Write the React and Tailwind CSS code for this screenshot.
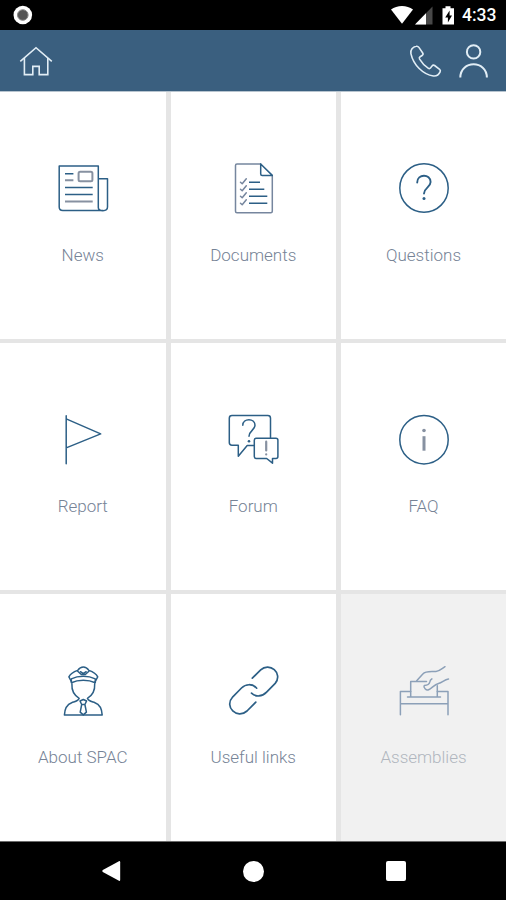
import clsx from "clsx";

const BLUE = "#2c5f86";
const GREY = "#8791a1";

function Icon({ children, stroke = BLUE, viewBox = "0 -0.7 60 60" }) {
  return (
    <svg
      viewBox={viewBox}
      className="h-[60px] w-[60px]"
      fill="none"
      stroke={stroke}
      strokeWidth="1.5"
      strokeLinecap="round"
      strokeLinejoin="round"
    >
      {children}
    </svg>
  );
}

function NewsIcon() {
  return (
    <Icon viewBox="0 0 60 60">
      <path d="M6.2 8h39.1v41.5q0 3.2 4.6 3.2t4.6-3.6V20.7h-9.2M6.2 8v41q0 3.5 3.6 3.5h40" />
      <g strokeLinecap="butt">
        <path d="M12 15.7h8.4M12 29.4h27.7M12 36.4h27.7" />
        <path d="M12 22.2h8.4M12 43.4h27.7" stroke={GREY} strokeWidth="2" />
        <rect x="25.6" y="13.7" width="13.8" height="9.6" rx="1.5" stroke={GREY} strokeWidth="2" />
      </g>
    </Icon>
  );
}

function DocumentsIcon() {
  return (
    <Icon viewBox="0 0 60 60">
      <path
        d="M37.7 6H14q-1.5 0-1.5 1.5v45.7q0 1.5 1.5 1.5h33.8q1.5 0 1.5-1.5V17.5"
        stroke="#76869e"
      />
      <path d="M37.7 6l11.6 11.4M37.7 6v9.9q0 1.5 1.5 1.5h10.1" />
      <path d="M26 24.3h11M26 31.3h15.3M26 38.3h18.3M26 45.3h18.3" strokeLinecap="butt" />
      <path
        d="M17.5 24.3l1.7 1.5 4.1-5M17.5 31.3l1.7 1.5 4.1-5M17.5 38.3l1.7 1.5 4.1-5M17.5 45.3l1.7 1.5 4.1-5"
        stroke="#76869e"
      />
    </Icon>
  );
}

function QuestionsIcon() {
  return (
    <Icon viewBox="0 0 60 60">
      <circle cx="30" cy="30" r="24.2" />
      <path d="M23.2 24.5c0-9 13.4-8.8 13.4-.5 0 5.5-6.6 5.8-6.6 11.5" strokeWidth="1.9" />
      <circle cx="30" cy="40.4" r="1.5" fill={BLUE} stroke="none" />
    </Icon>
  );
}

function ReportIcon() {
  return (
    <Icon>
      <path d="M13.2 6v48M13.2 9.2l34.5 15-34.5 14" />
    </Icon>
  );
}

function ForumIcon() {
  return (
    <Icon>
      <path d="M47.5 28V8.5q0-2.7-2.7-2.7H9Q6.3 5.8 6.3 8.5v24.3q0 2.7 2.7 2.7h6.3v11l8.9-10.8h7" />
      <path d="M33.3 28.5h19.6q2 0 2 2v16.3q0 2-2 2h-3.4v4.7l-5.8-4.7H33.3q-2 0-2-2V30.5q0-2 2-2z" />
      <path d="M19.8 15.5c0-7.3 12.2-7.3 12.2 0 0 4.8-6 5.6-6 11" />
      <circle cx="26" cy="31.5" r="1.3" fill={BLUE} stroke="none" />
      <path d="M43.2 32v8.8M43.2 44.6v.2" stroke={GREY} strokeWidth="2.2" />
    </Icon>
  );
}

function FaqIcon() {
  return (
    <Icon>
      <circle cx="30" cy="30" r="24.2" />
      <path d="M30 26.5V41" stroke={GREY} strokeWidth="3" strokeLinecap="butt" />
      <circle cx="30" cy="20.8" r="1.8" fill={GREY} stroke="none" />
    </Icon>
  );
}

function OfficerIcon() {
  return (
    <Icon>
      {/* Cap */}
      <path d="M18.3 20.8l-2.4-4.6c1.6-3.4 5.3-5.3 8.8-6.5 3.2-4.5 8-4.5 11.2 0 3.5 1.2 7.2 3.1 8.8 6.5l-2.4 4.6" />
      <path d="M18.3 18.2c7-3.4 17-3.4 24 0M18.3 22c7-3.3 17-3.3 24 0M18.3 18.2V22M42.3 18.2V22" />
      <path d="M24.7 10.5l3.6 3.3h4l3.6-3.3M27.5 11l2.8 2 2.8-2" />

      {/* Head and shoulders */}
      <path d="M18.9 23c-.4 6.8 1.6 11.2 7.3 14.6-1 3-4.5 3.3-7.5 4.4-5 1.8-7 6-7.3 12.4h37.8c-.3-6.4-2.3-10.6-7.3-12.4-3-1.1-6.5-1.4-7.5-4.4 5.7-3.4 7.7-7.8 7.3-14.6" />

      {/* Tie */}
      <path d="M27 40.3l3.3-1.5 3.3 1.5-1.7 3.5h-3.2zM28.7 43.8l-1.5 7.6 3.1 2.8 3.1-2.8-1.5-7.6" />
    </Icon>
  );
}

function LinksIcon() {
  return (
    <Icon>
      <g strokeWidth="1.7">
        <path d="M29.3 17.5l8.4-8.3c8.6-8.3 22.7 3.3 14.5 13.5l-8.6 8.8c-4.8 4.8-11 4.9-15.1 1" />
        <path d="M33.7 27.5c-4.4-4.8-11-4.4-15.2-.2l-8.7 8.8c-9.3 10.3 4.5 22.8 14.2 14.2l8.8-8.8" />
      </g>
    </Icon>
  );
}

function AssembliesIcon() {
  return (
    <Icon stroke="#8ca0b8">
      <path d="M6.4 54V30.8h10.3M43.3 30.8H54V54M6.4 43H54" />
      <path d="M32.5 20.7H16.7v15.6M43.3 25v11.3M13.5 36.4h33" />
      <path d="M22.7 20l5.9-6.5c3.5-3.6 8.6-2.3 13.4-2.7 3.8-.4 6-3 9-4.8M54.5 18.3c-4 .5-6.2 3.5-10 4.5-4.3 1.2-6.6 4.7-10 6.3-2.2 1-5.5-2.4-4.2-4.3 2.1 0 5-1 5.6-3.8.2-1.5.8-2 2-2.8" />
    </Icon>
  );
}

const tiles = [
  { label: "News", icon: NewsIcon },
  { label: "Documents", icon: DocumentsIcon },
  { label: "Questions", icon: QuestionsIcon },
  { label: "Report", icon: ReportIcon },
  { label: "Forum", icon: ForumIcon },
  { label: "FAQ", icon: FaqIcon },
  { label: "About SPAC", icon: OfficerIcon },
  { label: "Useful links", icon: LinksIcon },
  { label: "Assemblies", icon: AssembliesIcon, disabled: true },
];

function Tile({ label, icon: TileIcon, disabled }) {
  return (
    <button
      disabled={disabled}
      className={clsx(
        "flex flex-col items-center pt-[66px]",
        disabled ? "bg-[#f1f1f1] text-[#b0b6be]" : "bg-white text-[#768396]"
      )}
    >
      <TileIcon />
      <span className="mt-[25px] text-[17px] leading-6 font-light whitespace-nowrap">
        {label}
      </span>
    </button>
  );
}

function StatusBar() {
  return (
    <div className="flex h-[30px] shrink-0 items-center justify-between bg-black pr-[9px] pl-[13px]">
      <svg viewBox="0 0 20 20" className="h-5 w-5">
        <circle cx="9.8" cy="10" r="9.3" fill="#fff" />
        <circle cx="9.8" cy="10" r="5.3" fill="#555" stroke="#888" strokeWidth="1" />
      </svg>

      <div className="flex items-center">
        <svg viewBox="0 0 66 20" className="h-5 w-[66px]" fill="#fff">
          <path d="M0 4.5C6-.3 16-.3 22 4.5L11 18.8z" />
          <path d="M41.5 1.5v18H24z" fill="#484848" />
          <path d="M35 8.2v11.3H24z" />
          <path d="M54.5 1.3h5v2H63v16.2H51.5V3.3h3z" />
          <path d="M58.6 5.5l-4.4 7h2.7v5l4.1-7h-2.4z" fill="#000" />
        </svg>
        <span className="ml-[5px] w-[35px] pt-px text-[17.5px] leading-[29px] font-medium text-white">
          4:33
        </span>
      </div>
    </div>
  );
}

function Header() {
  return (
    <header className="flex h-[62px] shrink-0 items-center justify-between border-b border-[#b7c4cf] bg-[#3a5f7f] pr-[17px] pl-[19px]">
      <svg
        viewBox="0 0 34 34"
        className="h-[34px] w-[34px]"
        fill="none"
        stroke="#e1edf5"
        strokeWidth="1.6"
      >
        <path d="M1.3 17.3L17 3.7l15.8 13.6" />
        <path d="M5.4 14v16.6h8.4v-8.2h6.4v8.2h8.6V14" />
      </svg>

      <div className="flex items-center gap-[17px]">
        <svg
          viewBox="0 0 34 34"
          className="h-[34px] w-[34px]"
          fill="none"
          stroke="#e1edf5"
          strokeWidth="1.6"
          strokeLinejoin="round"
        >
          <path d="M8.2 2.3C4.7 2.7 2.2 6.2 2.9 9.6 5.4 21 15 30.5 25.4 32c2.7.3 5.5-1.4 6.7-4.1.5-1.1.3-2-.5-2.6l-5-3.8c-1-.7-2-.4-2.6.5l-1.4 1.9c-.6.8-1.6.9-2.5.3-3.6-2.5-6.4-5.6-8.5-9.1-.5-.9-.3-1.8.5-2.3l2-1.3c1-.6 1.2-1.5.6-2.5L10.9 3.4c-.6-.9-1.5-1.3-2.7-1.1z" />
        </svg>
        <svg
          viewBox="0 0 30 36"
          className="h-9 w-[30px]"
          fill="none"
          stroke="#e1edf5"
          strokeWidth="2"
        >
          <circle cx="14.6" cy="8.9" r="6.7" />
          <path d="M1.3 34.6c0-17.7 26.6-17.7 26.6 0" />
        </svg>
      </div>
    </header>
  );
}

function NavigationBar() {
  return (
    <nav className="flex h-[59px] shrink-0 items-center justify-between border-t border-[#6b6b6b] bg-black pr-[100px] pl-[101px]">
      <svg viewBox="0 0 20 22" className="h-[22px] w-5" fill="#fff">
        <path d="M17.5 1.4q1.7-.9 1.7.9v17.4q0 1.8-1.7.9L1.8 12q-1.2-1 0-2z" />
      </svg>
      <span className="mr-px h-[21px] w-[21px] rounded-full bg-white" />
      <span className="h-5 w-5 rounded-xs bg-white" />
    </nav>
  );
}

export default function App() {
  return (
    <div className="flex h-[900px] w-[506px] flex-col overflow-hidden bg-white font-['Roboto',sans-serif]">
      <StatusBar />
      <Header />

      <main className="grid min-h-0 flex-1 grid-cols-[165.5px_165.5px_1fr] grid-rows-3 gap-x-[5px] gap-y-[4.5px] bg-[#e5e5e5]">
        {tiles.map((tile) => (
          <Tile key={tile.label} {...tile} />
        ))}
      </main>

      <NavigationBar />
    </div>
  );
}
